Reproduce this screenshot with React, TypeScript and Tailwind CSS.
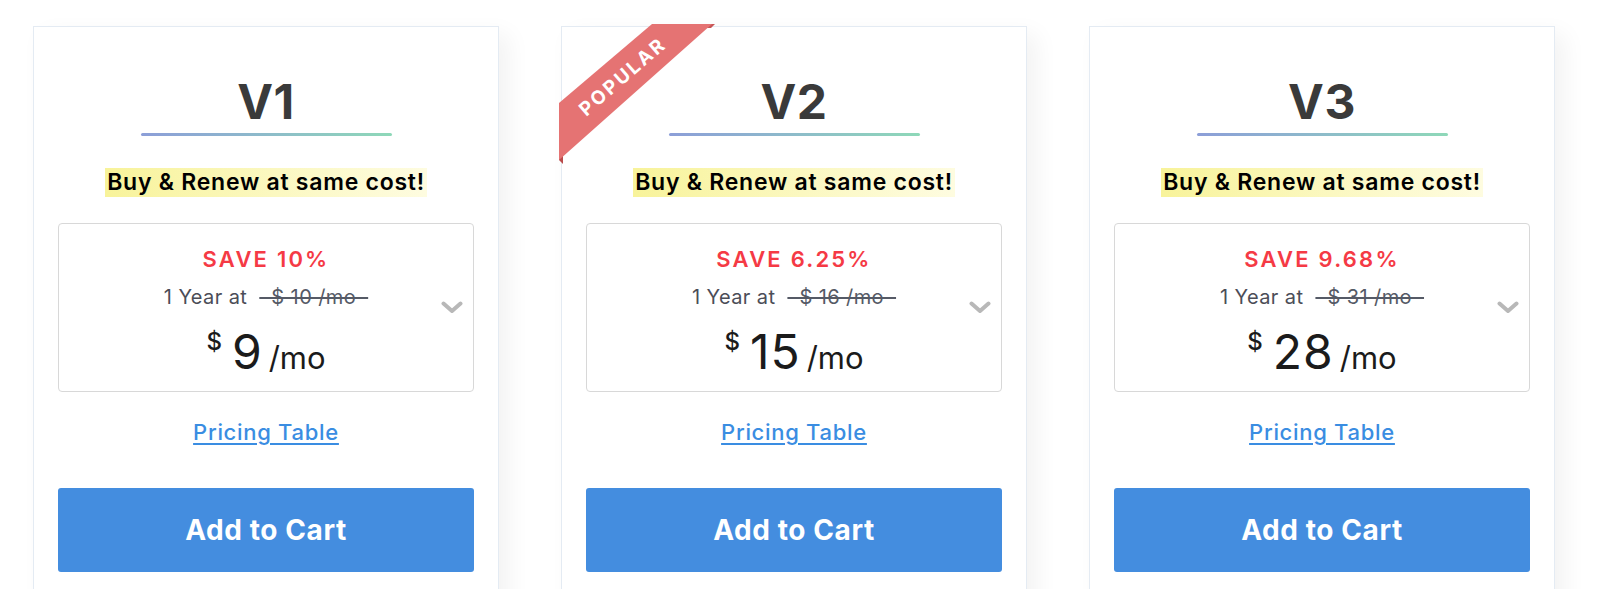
import React from 'react';

type Plan = {
  name: string;
  save: string;
  oldPrice: string;
  price: string;
  popular?: boolean;
};

const plans: Plan[] = [
  { name: 'V1', save: 'SAVE 10%', oldPrice: '10', price: '9' },
  { name: 'V2', save: 'SAVE 6.25%', oldPrice: '16', price: '15', popular: true },
  { name: 'V3', save: 'SAVE 9.68%', oldPrice: '31', price: '28' },
];

function Ribbon() {
  return (
    <div className="absolute left-[-3px] top-[-3px] w-[160px] h-[140px] pointer-events-none">
      <svg width="160" height="140" viewBox="0 0 160 140" className="absolute inset-0">
        <polygon points="0,112 4,116 4,140 0,136" fill="#b94a4a" />
        <polygon points="140,0 156,0 152,4 144,4" fill="#c75656" />
        <polygon points="93,0 153,0 0,136 0,79" fill="#e57373" />
      </svg>
      <div className="absolute left-[64px] top-[53px] -translate-x-1/2 -translate-y-1/2 -rotate-[41deg] text-white font-bold text-[19px] leading-[20px] tracking-[2.5px] whitespace-nowrap">
        POPULAR
      </div>
    </div>
  );
}

function PlanCard({ plan }: { plan: Plan }) {
  return (
    <div className="relative w-[466px] shrink-0 h-[620px] bg-white border border-[#e4ebf3] shadow-[10px_8px_22px_rgba(0,0,0,0.05)] px-6 pt-[51px] flex flex-col items-center">
      {plan.popular && <Ribbon />}

      {/* Title */}
      <h2 className="text-[48px] leading-[48px] font-bold tracking-[0.5px] text-[#3a3a3a]">{plan.name}</h2>
      <div className="mt-[7px] w-[251px] h-[3px] rounded-full bg-linear-to-r from-[#8c9ed8] to-[#8ed8b8]" />

      {/* Highlight */}
      <div className="mt-[32px] px-[2px] text-[23px] leading-[29px] font-semibold tracking-[0.75px] text-black bg-linear-to-r from-[#f8f39a] to-[#fefce0]">
        Buy &amp; Renew at same cost!
      </div>

      {/* Price box */}
      <div className="relative mt-[26px] w-full h-[169px] border border-[#d8d8d8] rounded-[4px] flex flex-col items-center pt-[23px]">
        <div className="text-[22px] leading-[24px] font-semibold tracking-[2.2px] text-[#f53a45]">{plan.save}</div>
        <div className="mt-[14px] text-[20px] leading-[24px] tracking-[0.4px] text-[#4b4d57]">
          1 Year at <span className="ml-[6px] line-through decoration-[1.5px] text-[#555a66]">{'\u00a0\u00a0$ ' + plan.oldPrice + ' /mo\u00a0\u00a0'}</span>
        </div>
        <div className="mt-[19px] flex items-start text-[#1b1b1b]">
          <span className="text-[24px] leading-[24px] font-medium mt-[2px] mr-[10px]">$</span>
          <div className="flex items-baseline">
            <span className="text-[48px] leading-[48px] tracking-[1px]">{plan.price}</span>
            <span className="ml-[6px] text-[31px] leading-[48px]">/mo</span>
          </div>
        </div>
        <svg width="22" height="13" viewBox="0 0 22 13" className="absolute right-[10px] top-[77px]">
          <polyline points="2.5,2.5 11,10 19.5,2.5" fill="none" stroke="#b8b8b8" strokeWidth="4" strokeLinejoin="round" strokeLinecap="round" />
        </svg>
      </div>

      {/* Link */}
      <a href="#" className="mt-[26px] text-[22px] leading-[28px] font-medium tracking-[0.7px] text-[#3a8de2] underline underline-offset-[3px] decoration-[1.5px]">
        Pricing Table
      </a>

      {/* Button */}
      <button className="mt-[42px] w-full h-[84px] rounded-[3px] bg-[#448ddf] text-white text-[28px] font-bold tracking-[0.6px]">
        Add to Cart
      </button>
    </div>
  );
}

export default function App() {
  return (
    <div className="h-[589px] w-[1600px] overflow-hidden bg-white pt-[26px] pl-[33px] flex gap-[62px] font-['Inter','Noto_Sans',sans-serif]">
      {plans.map((p) => (
        <PlanCard key={p.name} plan={p} />
      ))}
    </div>
  );
}
